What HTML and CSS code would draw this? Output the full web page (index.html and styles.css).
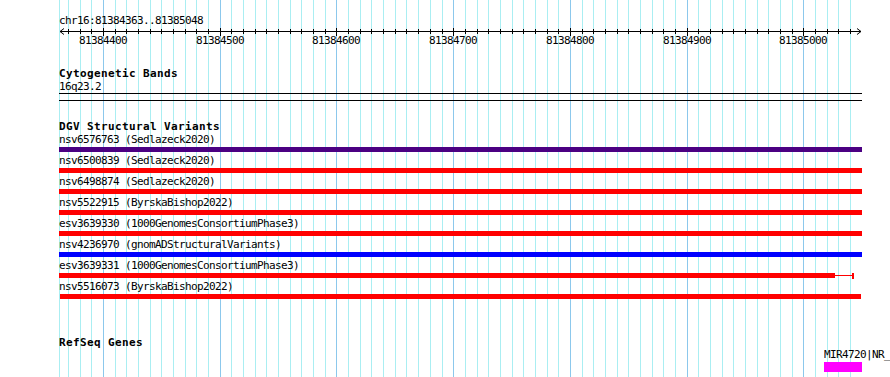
FILE: index.html
```html
<!DOCTYPE html>
<html>
<head>
<meta charset="utf-8">
<title>Genome browser</title>
<link rel="stylesheet" href="styles.css">
</head>
<body>
<svg class="grid" width="890" height="377" viewBox="0 0 890 377">
  <path class="grid-minor" d="M59.5 0V377M68.5 0V377M80.5 0V377M91.5 0V377M115.5 0V377M126.5 0V377M138.5 0V377M150.5 0V377M161.5 0V377M173.5 0V377M185.5 0V377M196.5 0V377M208.5 0V377M231.5 0V377M243.5 0V377M255.5 0V377M266.5 0V377M278.5 0V377M290.5 0V377M301.5 0V377M313.5 0V377M325.5 0V377M348.5 0V377M360.5 0V377M371.5 0V377M383.5 0V377M395.5 0V377M406.5 0V377M418.5 0V377M430.5 0V377M442.5 0V377M465.5 0V377M477.5 0V377M488.5 0V377M500.5 0V377M512.5 0V377M523.5 0V377M535.5 0V377M547.5 0V377M558.5 0V377M582.5 0V377M593.5 0V377M605.5 0V377M617.5 0V377M628.5 0V377M640.5 0V377M652.5 0V377M663.5 0V377M675.5 0V377M698.5 0V377M710.5 0V377M722.5 0V377M733.5 0V377M745.5 0V377M757.5 0V377M768.5 0V377M780.5 0V377M792.5 0V377M815.5 0V377M827.5 0V377M838.5 0V377M850.5 0V377"/>
  <path class="grid-major" d="M103.5 0V377M220.5 0V377M336.5 0V377M453.5 0V377M570.5 0V377M687.5 0V377M803.5 0V377"/>
</svg>

<main class="view">
  <div class="chrom">chr16:81384363..81385048</div>

  <svg class="ruler" width="810" height="20" viewBox="55 27 810 20">
    <path class="ruler-line" d="M60 31.5H861M60 31.5L64 28.5M60 31.5L64 34.5M861 31.5L857 28.5M861 31.5L857 34.5"/>
    <path class="ruler-tick" d="M68.5 29V34M80.5 29V34M91.5 29V34M115.5 29V34M126.5 29V34M138.5 29V34M150.5 29V34M161.5 29V34M173.5 29V34M185.5 29V34M196.5 29V34M208.5 29V34M231.5 29V34M243.5 29V34M255.5 29V34M266.5 29V34M278.5 29V34M290.5 29V34M301.5 29V34M313.5 29V34M325.5 29V34M348.5 29V34M360.5 29V34M371.5 29V34M383.5 29V34M395.5 29V34M406.5 29V34M418.5 29V34M430.5 29V34M442.5 29V34M465.5 29V34M477.5 29V34M488.5 29V34M500.5 29V34M512.5 29V34M523.5 29V34M535.5 29V34M547.5 29V34M558.5 29V34M582.5 29V34M593.5 29V34M605.5 29V34M617.5 29V34M628.5 29V34M640.5 29V34M652.5 29V34M663.5 29V34M675.5 29V34M698.5 29V34M710.5 29V34M722.5 29V34M733.5 29V34M745.5 29V34M757.5 29V34M768.5 29V34M780.5 29V34M792.5 29V34M815.5 29V34M827.5 29V34M838.5 29V34M850.5 29V34M103.5 28V36M220.5 28V36M336.5 28V36M453.5 28V36M570.5 28V36M687.5 28V36M803.5 28V36"/>
    <text class="ruler-num" x="103" y="44">81384400</text>
    <text class="ruler-num" x="220" y="44">81384500</text>
    <text class="ruler-num" x="336" y="44">81384600</text>
    <text class="ruler-num" x="453" y="44">81384700</text>
    <text class="ruler-num" x="570" y="44">81384800</text>
    <text class="ruler-num" x="687" y="44">81384900</text>
    <text class="ruler-num" x="803" y="44">81385000</text>
  </svg>

  <section class="track track-cyto">
    <h2 class="track-title">Cytogenetic Bands</h2>
    <div class="label band-label">16q23.2</div>
    <div class="band"></div>
  </section>

  <section class="track track-dgv">
    <h2 class="track-title">DGV Structural Variants</h2>
    <div class="features">
      <div class="feature"><div class="label">nsv6576763 (Sedlazeck2020)</div><div class="bar bar-purple"></div></div>
      <div class="feature"><div class="label">nsv6500839 (Sedlazeck2020)</div><div class="bar bar-red"></div></div>
      <div class="feature"><div class="label">nsv6498874 (Sedlazeck2020)</div><div class="bar bar-red"></div></div>
      <div class="feature"><div class="label">nsv5522915 (ByrskaBishop2022)</div><div class="bar bar-red"></div></div>
      <div class="feature"><div class="label">esv3639330 (1000GenomesConsortiumPhase3)</div><div class="bar bar-red"></div></div>
      <div class="feature"><div class="label">nsv4236970 (gnomADStructuralVariants)</div><div class="bar bar-blue"></div></div>
      <div class="feature"><div class="label">esv3639331 (1000GenomesConsortiumPhase3)</div>
        <div class="bar-split"><div class="split-body"></div><div class="split-line"></div><div class="split-cap"></div></div>
      </div>
      <div class="feature"><div class="label">nsv5516073 (ByrskaBishop2022)</div><div class="bar bar-red bar-inset"></div></div>
    </div>
  </section>

  <section class="track track-refseq">
    <h2 class="track-title">RefSeq Genes</h2>
    <div class="gene"><div class="label gene-label">MIR4720|NR_</div><div class="gene-bar"></div></div>
  </section>
</main>
</body>
</html>
```

FILE: styles.css
```css
html, body {
  margin: 0;
  padding: 0;
  width: 890px;
  height: 377px;
  overflow: hidden;
  background: #ffffff;
}

body {
  position: relative;
  font-family: "DejaVu Sans Mono", monospace;
  font-size: 11px;
  letter-spacing: -0.62px;
  line-height: 12px;
  color: #000;
}

.grid {
  position: absolute;
  left: 0;
  top: 0;
  z-index: 0;
}

.grid-minor {
  stroke: #aaeef2;
  stroke-width: 1;
  fill: none;
}

.grid-major {
  stroke: #8cc8ec;
  stroke-width: 1;
  fill: none;
}

.view {
  position: relative;
  z-index: 1;
  padding-top: 15px;
}

.chrom,
.track {
  margin-left: 59px;
  width: 803px;
}

.chrom {
  line-height: 12px;
  white-space: nowrap;
}

.ruler {
  display: block;
  margin-left: 55px;
}

.ruler-line,
.ruler-tick {
  stroke: #000;
  stroke-width: 1;
  fill: none;
}

.ruler-num {
  font-family: "DejaVu Sans Mono", monospace;
  font-size: 11px;
  letter-spacing: -0.62px;
  text-anchor: middle;
  fill: #000;
}

.track-title {
  margin: 0;
  font-size: 11px;
  letter-spacing: 0.38px;
  font-weight: bold;
  line-height: 12px;
  white-space: nowrap;
}

.label {
  line-height: 12px;
  white-space: nowrap;
}

.track-cyto {
  margin-top: 21px;
}

.band-label {
  margin-top: 1px;
}

.band {
  height: 6px;
  border-top: 1px solid #000;
  border-bottom: 1px solid #000;
}

.track-dgv {
  margin-top: 20px;
}

.features {
  padding-top: 1px;
}

.feature {
  padding-bottom: 3px;
}

.bar {
  margin-top: 1px;
  height: 5px;
}

.bar-purple { background: #4b0082; }
.bar-red { background: #ff0000; }
.bar-blue { background: #0000ff; }

.bar-inset {
  margin-left: 1px;
  width: 801px;
}

.bar-split {
  display: flex;
  align-items: center;
  margin-top: 1px;
  height: 5px;
}

.split-body {
  flex: 0 0 776px;
  height: 5px;
  background: #ff0000;
}

.split-line {
  flex: 0 0 17px;
  height: 1px;
  background: #ff0000;
}

.split-cap {
  flex: 0 0 2px;
  height: 6px;
  background: #ff0000;
}

.track-refseq {
  margin-top: 35px;
}

.gene {
  margin-left: 765px;
  width: 66px;
}

.gene-label {
  overflow: hidden;
}

.gene-bar {
  margin-top: 1px;
  width: 38px;
  height: 10px;
  background: #ff00ff;
}
```
